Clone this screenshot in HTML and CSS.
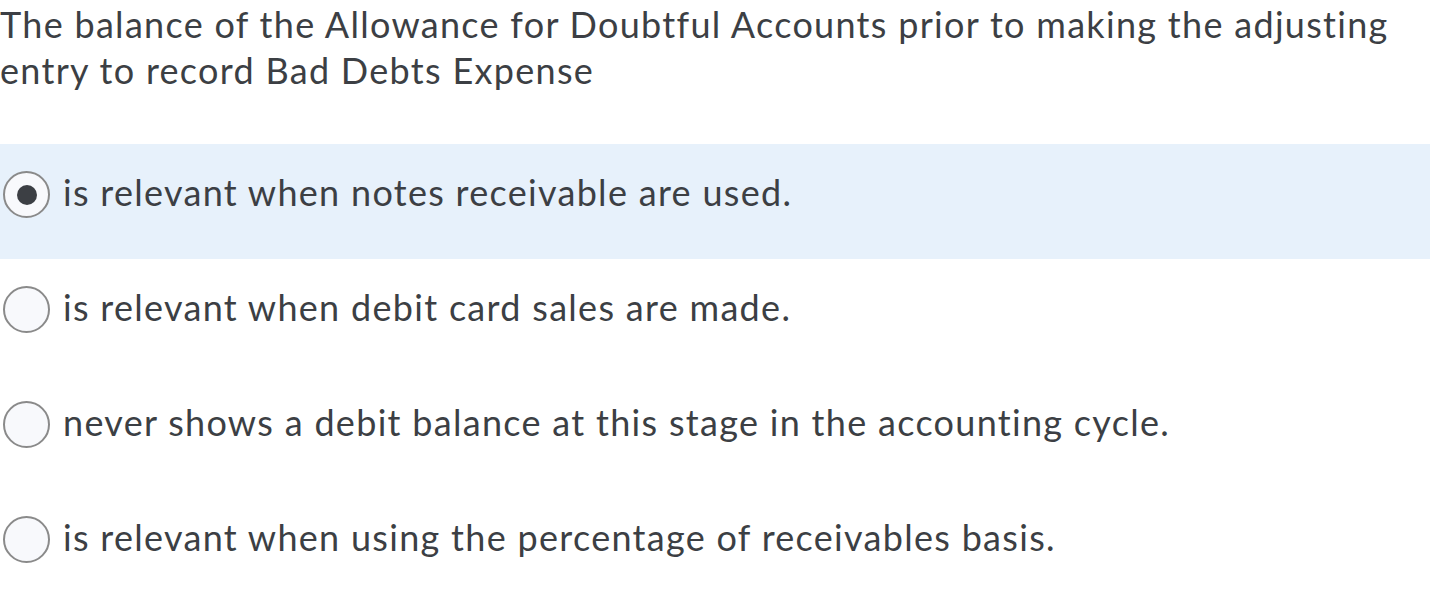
FILE: index.html
```html
<!DOCTYPE html>
<html>
<head>
<meta charset="utf-8">
<link rel="stylesheet" href="styles.css">
</head>
<body>
<div class="question">The balance of the Allowance for Doubtful Accounts prior to making the adjusting entry to record Bad Debts Expense</div>
<div class="options">
  <div class="option selected"><span class="radio checked"></span><span class="label">is relevant when notes receivable are used.</span></div>
  <div class="option"><span class="radio"></span><span class="label">is relevant when debit card sales are made.</span></div>
  <div class="option"><span class="radio"></span><span class="label">never shows a debit balance at this stage in the accounting cycle.</span></div>
  <div class="option"><span class="radio"></span><span class="label">is relevant when using the percentage of receivables basis.</span></div>
</div>
</body>
</html>
```
FILE: styles.css
```css
html, body {
  margin: 0;
  padding: 0;
  background: #ffffff;
}
body {
  font-family: Lato, "Open Sans", sans-serif;
  color: #3c3f44;
  font-size: 36px;
  letter-spacing: 1.3px;
}
.question {
  width: 1420px;
  line-height: 46px;
  padding-top: 1px;
}
.options {
  margin-top: 51px;
  display: flex;
  flex-direction: column;
}
.option {
  height: 115px;
  box-sizing: border-box;
  display: flex;
  align-items: flex-start;
  gap: 13px;
  padding-left: 3px;
  padding-top: 25px;
}
.option.selected {
  background: #e7f1fb;
}
.radio {
  margin-top: 2px;
  width: 43px;
  height: 43px;
  border: 2px solid #8a8a8a;
  border-radius: 50%;
  background: #f8f9fc;
  display: flex;
  align-items: center;
  justify-content: center;
  flex: none;
}
.radio.checked::after {
  content: "";
  width: 20px;
  height: 20px;
  border-radius: 50%;
  background: #3c3f44;
}
.label {
  line-height: 46px;
}
```
